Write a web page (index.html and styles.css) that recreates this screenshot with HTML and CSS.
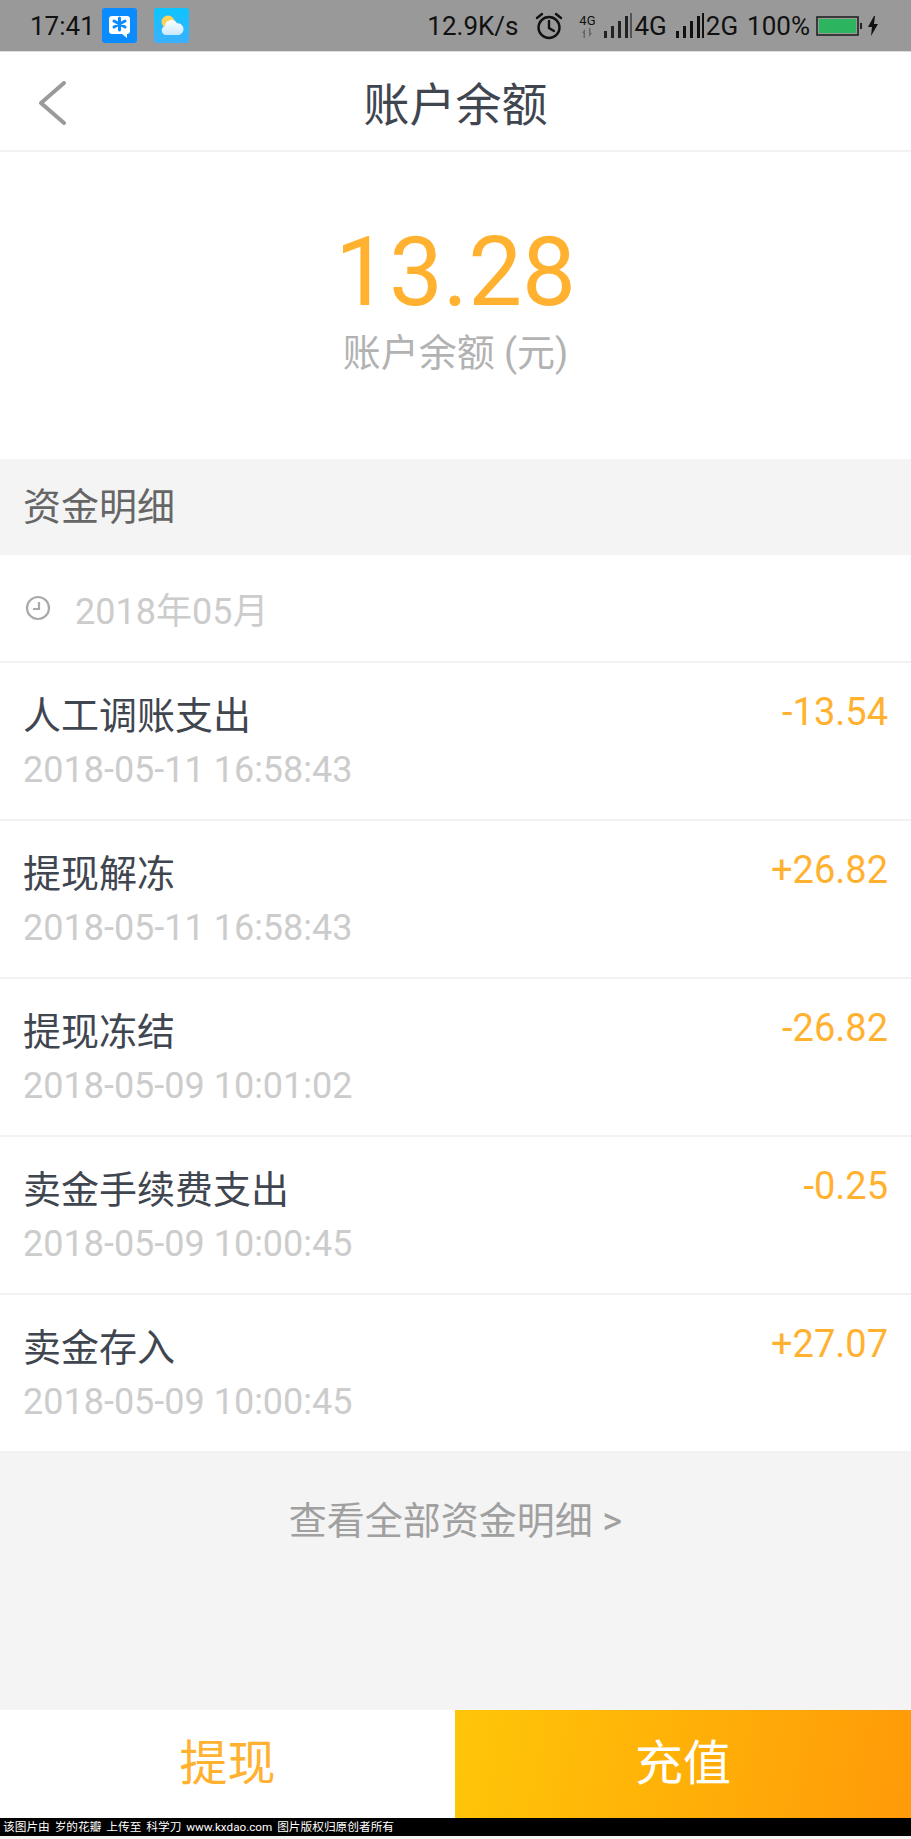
FILE: index.html
```html
<!DOCTYPE html>
<html lang="en">
<head>
    <meta charset="UTF-8">
    <meta name="viewport" content="width=device-width, initial-scale=1.0">
    <title>账户余额</title>
    <link rel="stylesheet" href="styles.css">
</head>
<body>
    <div class="page">
        <div class="status-bar">
            <div class="status-left">
                <span class="time">17:41</span>
                <svg class="app-icon" viewBox="0 0 35 35">
                    <rect width="35" height="35" rx="3" fill="#0a8cff"/>
                    <path d="M10 8h15a3 3 0 0 1 3 3v12a3 3 0 0 1-3 3v4l-5-4h-10a3 3 0 0 1-3-3v-12a3 3 0 0 1 3-3z" fill="#fff"/>
                    <path d="M17.5 10v12M12 13l11 6M23 13l-11 6" stroke="#0a8cff" stroke-width="3" stroke-linecap="round"/>
                </svg>
                <svg class="app-icon weather" viewBox="0 0 35 35">
                    <defs>
                        <linearGradient id="sky" x1="0" y1="0" x2="0" y2="1">
                            <stop offset="0" stop-color="#0cc4ff"/>
                            <stop offset="1" stop-color="#3cb0ff"/>
                        </linearGradient>
                        <linearGradient id="cloud" x1="0" y1="0" x2="0" y2="1">
                            <stop offset="0" stop-color="#fff"/>
                            <stop offset="1" stop-color="#c8e8fc"/>
                        </linearGradient>
                    </defs>
                    <rect width="35" height="35" rx="3" fill="url(#sky)"/>
                    <circle cx="14" cy="14" r="6.5" fill="#fdd35a"/>
                    <path d="M12 27a4.500 4.500 0 0 1-1-8.800a6.500 6.500 0 0 1 12-3a6 6 0 0 1 2 11.800z" fill="url(#cloud)"/>
                </svg>
            </div>
            <div class="status-right">
                <span class="speed">12.9K/s</span>
                <svg class="alarm" viewBox="0 0 30 30" fill="none" stroke="#111" stroke-width="2.4">
                    <circle cx="15" cy="16.500" r="10.500"/>
                    <path d="M15 10v7l5 3M3 7l5-4M27 7l-5-4" stroke-linecap="round"/>
                </svg>
                <span class="net-tag">
                    <span class="net-text">4G</span>
                    <svg class="net-arrows" viewBox="0 0 12 10"><path d="M1 5l3-4v9h-1.500v-5zM11 5l-3 4v-9h1.500v5z" fill="#666"/></svg>
                </span>
                <svg class="signal" viewBox="0 0 28 26"><path d="M0 18h3v7h-3zM7 13h3v12h-3zM14 8h3v17h-3zM21 3h3v22h-3z" fill="#222"/><path d="M26 0h2v25h-2z" fill="#555"/></svg>
                <span class="net">4G</span>
                <svg class="signal" viewBox="0 0 28 26"><path d="M0 18h3v7h-3zM7 13h3v12h-3zM14 8h3v17h-3zM21 3h3v22h-3zM26 0h2v25h-2z" fill="#111"/></svg>
                <span class="net">2G</span>
                <span class="percent">100%</span>
                <svg class="battery" viewBox="0 0 46 20">
                    <rect x="1" y="1" width="41" height="18" fill="none" stroke="#222" stroke-width="1.600"/>
                    <rect x="3" y="3" width="37" height="14" fill="#2db45f"/>
                    <rect x="44" y="7" width="2" height="6" fill="#222"/>
                </svg>
                <svg class="bolt" viewBox="0 0 10 20"><path d="M6 0l-6 11h4l-1 9 7-12h-4l1-8z" fill="#111"/></svg>
            </div>
        </div>

        <div class="header">
            <svg class="back" viewBox="0 0 28 44" fill="none"><path d="M26 2l-23 20 23 20" stroke="#9a9a9a" stroke-width="4" stroke-linecap="round" stroke-linejoin="round"/></svg>
            <h1 class="title">账户余额</h1>
        </div>

        <div class="balance">
            <div class="amount">13.28</div>
            <div class="amount-label">账户余额 (元)</div>
        </div>

        <div class="section-title">资金明细</div>

        <div class="month">
            <svg class="clock" viewBox="0 0 26 26" fill="none" stroke="#a9a9ad" stroke-width="2.200">
                <circle cx="13" cy="13" r="11"/>
                <path d="M14 7v7h-6"/>
            </svg>
            <span>2018年05月</span>
        </div>

        <div class="row">
            <div class="row-top"><span class="row-name">人工调账支出</span><span class="row-money">-13.54</span></div>
            <div class="row-date">2018-05-11 16:58:43</div>
        </div>
        <div class="row">
            <div class="row-top"><span class="row-name">提现解冻</span><span class="row-money">+26.82</span></div>
            <div class="row-date">2018-05-11 16:58:43</div>
        </div>
        <div class="row">
            <div class="row-top"><span class="row-name">提现冻结</span><span class="row-money">-26.82</span></div>
            <div class="row-date">2018-05-09 10:01:02</div>
        </div>
        <div class="row">
            <div class="row-top"><span class="row-name">卖金手续费支出</span><span class="row-money">-0.25</span></div>
            <div class="row-date">2018-05-09 10:00:45</div>
        </div>
        <div class="row">
            <div class="row-top"><span class="row-name">卖金存入</span><span class="row-money">+27.07</span></div>
            <div class="row-date">2018-05-09 10:00:45</div>
        </div>

        <div class="more">查看全部资金明细 &gt;</div>

        <div class="actions">
            <div class="btn-withdraw">提现</div>
            <div class="btn-charge">充值</div>
        </div>

        <div class="watermark">该图片由 岁的花瓣 上传至 科学刀 www.kxdao.com 图片版权归原创者所有</div>
    </div>
</body>
</html>
```

FILE: styles.css
```css
* {
    box-sizing: border-box;
}
body {
    margin: 0;
    background-color: #f4f4f4;
    font-family: Roboto, "Noto Sans CJK SC", sans-serif;
}
.page {
    width: 911px;
    height: 1839px;
    display: flex;
    flex-direction: column;
    overflow: hidden;
}

/* status bar */
.status-bar {
    height: 51px;
    background-color: #999;
    color: #111;
    display: flex;
    justify-content: space-between;
    align-items: center;
    font-size: 26px;
    padding: 0 33px 0 30px;
}
.status-left,
.status-right {
    display: flex;
    align-items: center;
}
.time {
    width: 72px;
}
.app-icon {
    width: 35px;
    height: 35px;
}
.weather {
    margin-left: 17px;
}
.speed {
    margin-right: 16px;
}
.alarm {
    width: 30px;
    height: 30px;
    margin-right: 14px;
}
.net-tag {
    width: 18px;
    display: flex;
    flex-direction: column;
    align-items: center;
    margin-right: 8px;
}
.net-text {
    font-size: 13px;
    line-height: 15px;
}
.net-arrows {
    width: 12px;
    height: 10px;
}
.signal {
    width: 28px;
    height: 26px;
}
.net {
    margin: 0 9px 0 2px;
}
.percent {
    margin-right: 6px;
}
.battery {
    width: 46px;
    height: 20px;
    margin-right: 6px;
}
.bolt {
    width: 10px;
    height: 20px;
}

/* header */
.header {
    height: 101px;
    background-color: #fff;
    border-top: 1px solid #ddd;
    border-bottom: 2px solid #f2f2f2;
    display: flex;
    justify-content: center;
    align-items: center;
    position: relative;
}
.back {
    position: absolute;
    left: 38px;
    top: 29px;
    width: 28px;
    height: 44px;
}
.title {
    margin: 0;
    font-size: 46px;
    font-weight: 400;
    color: #3f4650;
}

/* balance */
.balance {
    height: 307px;
    background-color: #fff;
    display: flex;
    flex-direction: column;
    align-items: center;
    padding-top: 64px;
}
.amount {
    font-size: 96px;
    line-height: 112px;
    color: #ffb12f;
}
.amount-label {
    font-size: 38px;
    line-height: 50px;
    color: #b2b2b2;
}

.section-title {
    height: 96px;
    line-height: 96px;
    padding-left: 23px;
    font-size: 38px;
    color: #666;
    background-color: #f4f4f4;
}

.month {
    height: 108px;
    background-color: #fff;
    border-bottom: 2px solid #f2f2f2;
    display: flex;
    align-items: center;
    padding-left: 25px;
    font-size: 36px;
    color: #ccc;
}
.clock {
    width: 26px;
    height: 26px;
    margin-right: 24px;
}

/* list */
.row {
    height: 158px;
    background-color: #fff;
    border-bottom: 2px solid #f2f2f2;
    padding: 20px 23px 0;
}
.row:last-of-type {
    height: 160px;
    border-bottom: none;
}
.row-top {
    display: flex;
    justify-content: space-between;
    align-items: center;
    height: 58px;
}
.row-name {
    font-size: 38px;
    color: #3f4650;
}
.row-money {
    font-size: 38px;
    color: #ffb12f;
}
.row-date {
    font-size: 36px;
    line-height: 50px;
    margin-top: 4px;
    color: #ccc;
}

.more {
    height: 257px;
    padding-top: 28px;
    text-align: center;
    font-size: 38px;
    line-height: 80px;
    color: #a0a0a0;
}

/* bottom buttons */
.actions {
    height: 108px;
    display: flex;
    font-size: 48px;
    line-height: 108px;
    text-align: center;
}
.btn-withdraw {
    width: 455px;
    background-color: #fff;
    color: #ffb12f;
}
.btn-charge {
    flex: 1;
    color: #fff;
    background: linear-gradient(100deg, #ffc608, #ff9a08);
}

.watermark {
    height: 18px;
    line-height: 18px;
    background-color: #000;
    color: #fff;
    font-size: 11.700px;
    padding-left: 3px;
    white-space: nowrap;
    word-spacing: 2px;
}
```
